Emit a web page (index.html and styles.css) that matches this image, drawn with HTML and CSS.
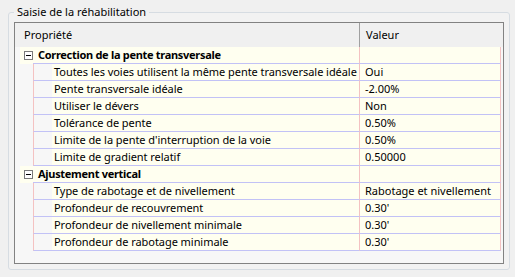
FILE: index.html
```html
<!DOCTYPE html>
<html lang="fr">
<head>
<meta charset="utf-8">
<link rel="stylesheet" href="styles.css">
</head>
<body>
<fieldset class="group">
  <legend class="group-title">Saisie de la réhabilitation</legend>
  <div class="grid">
    <div class="head">
      <div class="h-name">Propriété</div>
      <div class="h-val">Valeur</div>
    </div>
    <div class="rows">
      <div class="grow">
        <div class="gutter"></div>
        <div class="exp"><svg width="9" height="9" viewBox="0 0 9 9"><rect x="0.5" y="0.5" width="8" height="8" fill="#fff" stroke="#7a7a7a"/><path d="M2 4.5H7" stroke="#000"/></svg></div>
        <div class="g-name">Correction de la pente transversale</div>
        <div class="val"></div>
      </div>
      <div class="row"><div class="indent"></div><div class="name"><span class="pad"></span><span class="txt">Toutes les voies utilisent la même pente transversale idéale</span></div><div class="val">Oui</div></div>
      <div class="row"><div class="indent"></div><div class="name"><span class="pad"></span><span class="txt">Pente transversale idéale</span></div><div class="val">-2.00%</div></div>
      <div class="row"><div class="indent"></div><div class="name"><span class="pad"></span><span class="txt">Utiliser le dévers</span></div><div class="val">Non</div></div>
      <div class="row"><div class="indent"></div><div class="name"><span class="pad"></span><span class="txt">Tolérance de pente</span></div><div class="val">0.50%</div></div>
      <div class="row"><div class="indent"></div><div class="name"><span class="pad"></span><span class="txt">Limite de la pente d'interruption de la voie</span></div><div class="val">0.50%</div></div>
      <div class="row"><div class="indent"></div><div class="name"><span class="pad"></span><span class="txt">Limite de gradient relatif</span></div><div class="val">0.50000</div></div>
      <div class="grow">
        <div class="gutter"></div>
        <div class="exp"><svg width="9" height="9" viewBox="0 0 9 9"><rect x="0.5" y="0.5" width="8" height="8" fill="#fff" stroke="#7a7a7a"/><path d="M2 4.5H7" stroke="#000"/></svg></div>
        <div class="g-name">Ajustement vertical</div>
        <div class="val"></div>
      </div>
      <div class="row"><div class="indent"></div><div class="name"><span class="pad"></span><span class="txt">Type de rabotage et de nivellement</span></div><div class="val">Rabotage et nivellement</div></div>
      <div class="row"><div class="indent"></div><div class="name"><span class="pad"></span><span class="txt">Profondeur de recouvrement</span></div><div class="val">0.30'</div></div>
      <div class="row"><div class="indent"></div><div class="name"><span class="pad"></span><span class="txt">Profondeur de nivellement minimale</span></div><div class="val">0.30'</div></div>
      <div class="row"><div class="indent"></div><div class="name"><span class="pad"></span><span class="txt">Profondeur de rabotage minimale</span></div><div class="val">0.30'</div></div>
    </div>
  </div>
</fieldset>
</body>
</html>
```

FILE: styles.css
```css
html, body {
  margin: 0;
  background: #f0f0f0;
}
body {
  width: 515px;
  height: 277px;
  padding: 4px 0 0 8px;
  box-sizing: border-box;
  font-family: "Noto Sans", "DejaVu Sans", sans-serif;
  font-size: 11px;
  color: #000;
  overflow: hidden;
}
.group {
  margin: 0;
  width: 502px;
  height: 266px;
  box-sizing: border-box;
  border: 1px solid #d6dce2;
  border-radius: 3px;
  padding: 2px 5px 5px 5px;
  background: #f2f2f2;
}
.group-title {
  padding: 0 3px;
  line-height: 16px;
  height: 16px;
}
.grid {
  border: 1px solid #828282;
  height: 242px;
  box-sizing: border-box;
  background: #f7f7f7;
  line-height: 16px;
}
.head {
  display: flex;
  height: 24px;
  background: #f0f0f0;
  line-height: 24px;
}
.h-name {
  width: 344px;
  padding-left: 9px;
  box-sizing: border-box;
}
.h-val {
  border-left: 1px solid #a0a0a0;
  padding-left: 6px;
  flex: 1;
}
.rows {
  display: flex;
  flex-direction: column;
}
.grow, .row {
  display: flex;
  height: 17px;
}
.gutter {
  width: 5px;
}
.exp {
  width: 13px;
  background: #fffff0;
  display: flex;
  align-items: center;
  padding-left: 4px;
  box-sizing: border-box;
}
.exp svg {
  display: block;
}
.g-name {
  width: 326px;
  box-sizing: border-box;
  padding-left: 5px;
  font-weight: bold;
  letter-spacing: -0.3px;
  background: #fffff0;
  border-bottom: 1px solid #c2c2f6;
  white-space: nowrap;
}
.val {
  width: 142px;
  box-sizing: border-box;
  background: #fffff0;
  border-left: 1px solid #f4c2c2;
  border-right: 1px solid #f4c2c2;
  border-bottom: 1px solid #c2c2f6;
  padding-left: 5px;
  white-space: nowrap;
}
.indent {
  width: 18px;
}
.name {
  width: 326px;
  box-sizing: border-box;
  display: flex;
  border-left: 1px solid #f4c2c2;
  border-bottom: 1px solid #c2c2f6;
}
.pad {
  width: 18px;
  flex: none;
}
.txt {
  flex: 1;
  background: #fffff0;
  padding-left: 2px;
  letter-spacing: -0.05px;
  white-space: nowrap;
  overflow: hidden;
}
```
